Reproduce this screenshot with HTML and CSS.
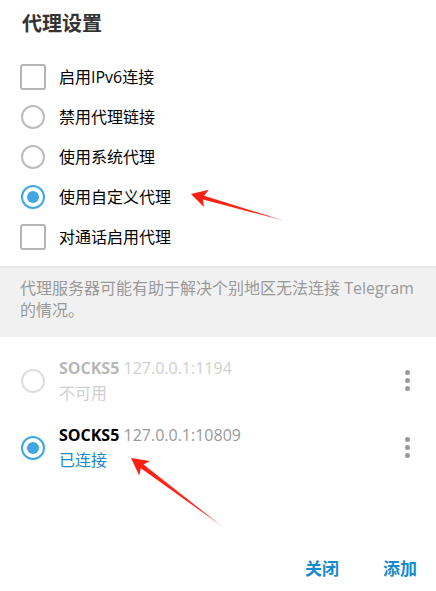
FILE: index.html
```html
<!DOCTYPE html>
<html lang="zh-CN">
<head>
  <meta charset="UTF-8" />
  <meta name="viewport" content="width=device-width, initial-scale=1" />
  <title>代理设置</title>
  <link rel="stylesheet" href="styles.css">
</head>
<body>

  <div class="proxy-box">
    <h1 class="box-title">代理设置</h1>

    <div class="options">
      <div class="option"><span class="check"></span>启用IPv6连接</div>
      <div class="option"><span class="radio"></span>禁用代理链接</div>
      <div class="option"><span class="radio"></span>使用系统代理</div>
      <div class="option"><span class="radio on"></span>使用自定义代理</div>
      <div class="option"><span class="check"></span>对通话启用代理</div>
    </div>

    <div class="about">代理服务器可能有助于解决个别地区无法连接 Telegram 的情况。</div>

    <div class="servers">
      <div class="server off">
        <span class="radio"></span>
        <div class="server-info">
          <div class="server-name"><b>SOCKS5</b> <span class="addr">127.0.0.1:1194</span></div>
          <div class="server-state">不可用</div>
        </div>
        <span class="more"><i></i><i></i><i></i></span>
      </div>
      <div class="server">
        <span class="radio on"></span>
        <div class="server-info">
          <div class="server-name"><b>SOCKS5</b> <span class="addr">127.0.0.1:10809</span></div>
          <div class="server-state ok">已连接</div>
        </div>
        <span class="more"><i></i><i></i><i></i></span>
      </div>
    </div>

    <div class="actions">
      <button class="link-btn">关闭</button>
      <button class="link-btn">添加</button>
    </div>

    <!-- red pointers drawn on top -->
    <svg class="marks" width="436" height="591" viewBox="0 0 436 591">
      <defs>
        <linearGradient id="fade1" x1="191" y1="194" x2="285" y2="221" gradientUnits="userSpaceOnUse">
          <stop offset="0" stop-color="#ff1e12"/>
          <stop offset="0.8" stop-color="#ff2a1a"/>
          <stop offset="1" stop-color="#ff8a80"/>
        </linearGradient>
        <linearGradient id="fade2" x1="131" y1="458" x2="223" y2="527" gradientUnits="userSpaceOnUse">
          <stop offset="0" stop-color="#ff1e12"/>
          <stop offset="0.8" stop-color="#ff2a1a"/>
          <stop offset="1" stop-color="#ff8a80"/>
        </linearGradient>
      </defs>
      <polygon fill="url(#fade1)" points="191,194 208.9,189.8 204.1,195.7 285,221 203,199.5 203.9,207"/>
      <polygon fill="url(#fade2)" points="131,458 150,461 143.5,464.6 223,527 140.9,468.2 139.2,475.4"/>
    </svg>
  </div>

</body>
</html>
```

FILE: styles.css
```css
body {
  margin: 0;
  background: #fff;
  font-family: "Open Sans", "Noto Sans CJK SC", sans-serif;
  color: #000;
}
.proxy-box {
  position: relative;
  width: 436px;
  height: 591px;
  overflow: hidden;
}
.box-title {
  margin: 0;
  padding: 10px 0 0 22px;
  font-size: 20px;
  line-height: 28px;
  font-weight: 600;
  color: #333;
}
.options {
  margin-top: 19px;
}
.option {
  display: flex;
  align-items: center;
  height: 40px;
  padding-left: 20px;
  font-size: 16px;
  line-height: 22px;
}
.check {
  box-sizing: border-box;
  width: 26px;
  height: 26px;
  border: 2px solid #b5b5b5;
  border-radius: 3px;
  margin-right: 13px;
  flex: none;
}
.radio {
  box-sizing: border-box;
  width: 24px;
  height: 24px;
  border: 2px solid #bdbdbd;
  border-radius: 50%;
  margin: 0 14px 0 1px;
  flex: none;
  display: flex;
  align-items: center;
  justify-content: center;
}
.radio.on {
  border-color: #40a7e3;
}
.radio.on::after {
  content: "";
  width: 12px;
  height: 12px;
  border-radius: 50%;
  background: #40a7e3;
}
.about {
  margin-top: 9px;
  background: #f1f1f1;
  box-shadow: inset 0 3px 3px -2px rgba(0,0,0,0.06);
  padding: 11px 20px 16px;
  font-size: 16px;
  line-height: 22px;
  color: #999;
}
.servers {
  margin-top: 8px;
}
.server {
  display: flex;
  align-items: center;
  height: 67px;
  padding: 0 26px 0 20px;
}
.server .radio {
  margin-top: 4px;
}
.server-info {
  flex: 1;
  padding-top: 4px;
  font-size: 16px;
  line-height: 25px;
}
.server-name b {
  font-weight: 700;
}
.addr {
  color: #999;
}
.server-state {
  color: #999;
}
.server-state.ok {
  color: #168acd;
}
.server.off .radio {
  border-color: #dedede;
}
.server.off .server-name b {
  color: #b8b8b8;
}
.server.off .addr,
.server.off .server-state {
  color: #cfcfcf;
}
.more {
  display: flex;
  flex-direction: column;
  gap: 3px;
  margin-top: 4px;
}
.more i {
  width: 5px;
  height: 5px;
  border-radius: 50%;
  background: #999;
}
.actions {
  display: flex;
  justify-content: flex-end;
  gap: 44px;
  margin-top: 80px;
  padding-right: 19px;
}
.link-btn {
  background: transparent;
  border: none;
  padding: 0;
  font-family: inherit;
  font-size: 17px;
  line-height: 20px;
  font-weight: 700;
  color: #168acd;
  cursor: pointer;
}
.marks {
  position: absolute;
  top: 0;
  left: 0;
  pointer-events: none;
}
```
